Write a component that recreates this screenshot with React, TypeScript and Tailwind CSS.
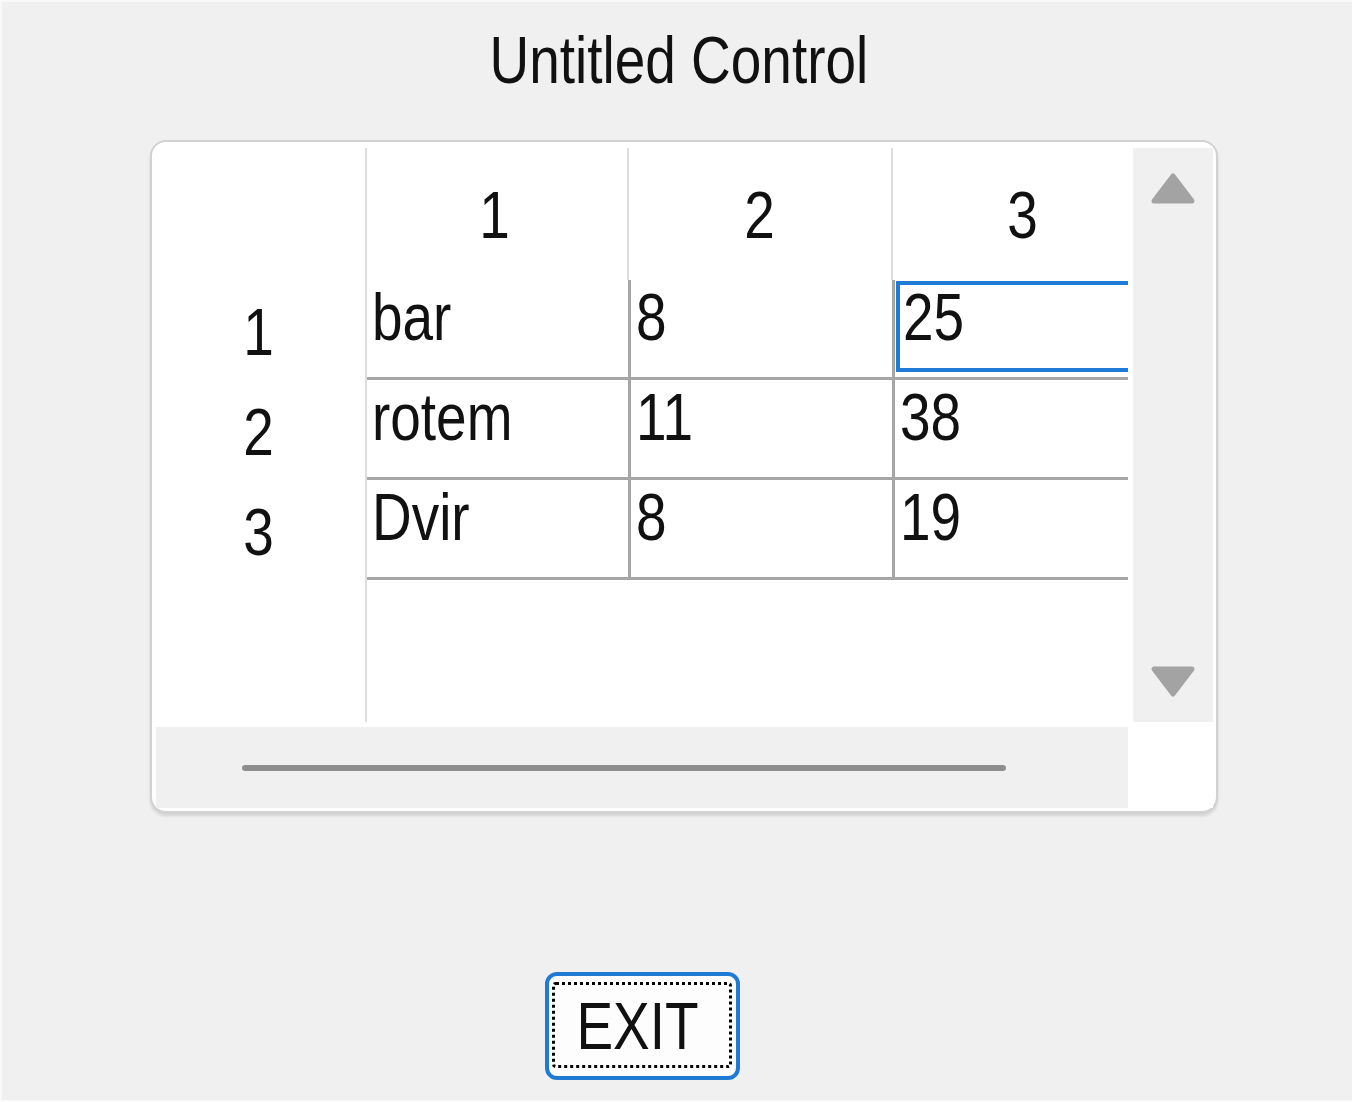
import React from "react";

const rows = [
  ["bar", "8", "25"],
  ["rotem", "11", "38"],
  ["Dvir", "8", "19"],
];

const font = "font-['Liberation_Sans',Arial,sans-serif]";

// narrow text: the dialog font is a condensed sans, squeeze Liberation Sans to match
function T({ children, center }: { children: React.ReactNode; center?: boolean }) {
  return (
    <span className={`inline-block scale-x-[0.82] ${center ? "origin-center" : "origin-left"}`}>{children}</span>
  );
}

function Arrow({ dir }: { dir: "up" | "down" }) {
  return (
    <svg width="46" height="34" viewBox="0 0 46 34" className="block">
      <path
        d={dir === "up" ? "M23 4 L42 29 L4 29 Z" : "M4 5 L42 5 L23 30 Z"}
        fill="#a3a3a3"
        stroke="#a3a3a3"
        strokeWidth="5"
        strokeLinejoin="round"
      />
    </svg>
  );
}

export default function App() {
  return (
    <div className={`w-[1352px] h-[1102px] bg-[#f0f0f0] border-t-2 border-l-2 border-b-2 border-[#f9f9f9] text-[#111] ${font}`}>
      {/* title */}
      <div className="pt-[24px] pl-[4px] text-center text-[67px] leading-[67px] h-[91px]">
        <T center>Untitled Control</T>
      </div>

      {/* grid control */}
      <div className="ml-[148px] mt-[47px] w-[1068px] h-[673px] rounded-[16px] border-2 border-[#d2d2d2] bg-white shadow-[0_3px_3px_rgba(0,0,0,0.12)] pt-[6px] pl-[4px]">
        <div className="flex h-[574px]">
          {/* row headers */}
          <div className="w-[209px] flex flex-col">
            <div className="h-[132px]" />
            {rows.map((_, i) => (
              <div key={i} className="h-[100px] pt-[18px] pr-[4px] text-center text-[67px] leading-[67px]">
                <T center>{i + 1}</T>
              </div>
            ))}
          </div>
          <div className="w-[2px] bg-[#dedede]" />

          {/* cells */}
          <div className="w-[761px] flex flex-col">
            <div className="flex h-[132px]">
              <div className="w-[262px] border-r-2 border-[#dcdcdc] flex items-center justify-center pr-[4px] text-[67px] leading-[67px]"><T center>1</T></div>
              <div className="w-[264px] border-r-2 border-[#dcdcdc] flex items-center justify-center text-[67px] leading-[67px]"><T center>2</T></div>
              <div className="flex-1 flex items-center justify-center pl-[24px] text-[67px] leading-[67px]"><T center>3</T></div>
            </div>
            {rows.map((r, i) => (
              <div key={i} className="flex h-[100px] border-b-[3px] border-[#a6a6a6]">
                <div className="w-[264px] border-r-[3px] border-[#a6a6a6] pl-[5px] pt-[3px] text-[67px] leading-[67px]"><T>{r[0]}</T></div>
                <div className="w-[264px] border-r-[3px] border-[#a6a6a6] pl-[5px] pt-[3px] text-[67px] leading-[67px]"><T>{r[1]}</T></div>
                {i === 0 ? (
                  <div className="flex-1 pt-px pl-px">
                    <div className="h-[91px] border-[4px] border-r-0 border-[#1e7bd6] pl-[3px]">
                      <div className="-mt-[2px] text-[67px] leading-[67px]"><T>{r[2]}</T></div>
                    </div>
                  </div>
                ) : (
                  <div className="flex-1 pl-[5px] pt-[3px] text-[67px] leading-[67px]"><T>{r[2]}</T></div>
                )}
              </div>
            ))}
          </div>
          <div className="w-[5px]" />

          {/* vertical scrollbar */}
          <div className="w-[80px] bg-[#f0f0f0] flex flex-col items-center justify-between py-[24px]">
            <Arrow dir="up" />
            <Arrow dir="down" />
          </div>
        </div>

        <div className="flex h-[86px]">
          <div className="w-[972px] bg-[#f0f0f0] border-t-[5px] border-white flex items-center pl-[86px]">
            <div className="w-[764px] h-[6px] rounded-full bg-[#8e8e8e]" />
          </div>
          <div className="w-[85px] bg-white" />
        </div>
      </div>

      {/* exit button */}
      <div className="ml-[543px] mt-[159px] w-[195px] h-[108px] rounded-[12px] border-[4px] border-[#1f7ad4] bg-[#fdfdfd] pt-[6px] pl-[3px] pr-[4px] pb-[8px]">
        <div className="h-full rounded-[4px] border-[3px] border-dotted border-black flex items-center justify-center pr-[10px] text-[67px] leading-[67px]">
          <T center>EXIT</T>
        </div>
      </div>
    </div>
  );
}
